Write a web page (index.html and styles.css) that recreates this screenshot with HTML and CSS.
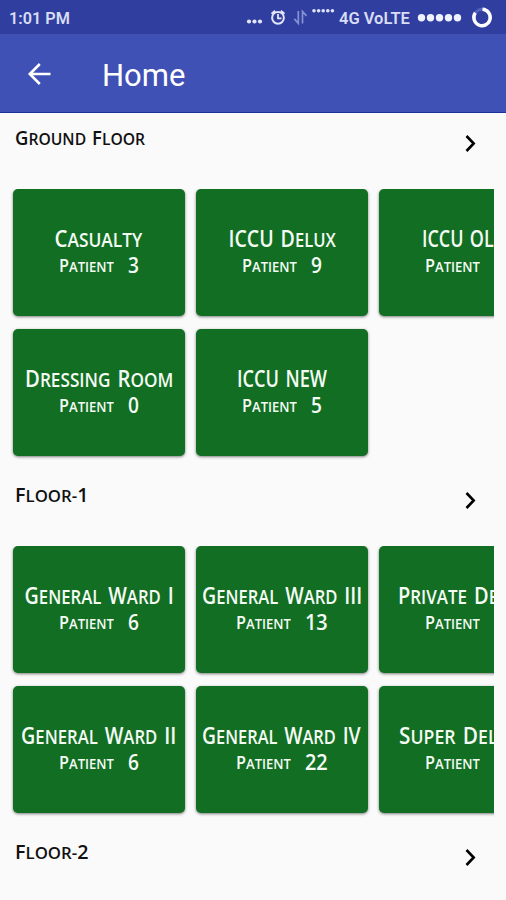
FILE: index.html
```html
<!DOCTYPE html>
<html lang="en">
<head>
<meta charset="utf-8">
<meta name="viewport" content="width=device-width">
<title>Home</title>
<link rel="stylesheet" href="styles.css">
</head>
<body>
<header>
  <div class="status">
    <span class="clock" data-width="61">1:01 PM</span>
    <svg class="status-icons" width="90" height="34" viewBox="0 0 90 34">
      <g fill="#e3e6f8"><circle cx="3" cy="21.5" r="2.1"/><circle cx="8.5" cy="21.5" r="2.1"/><circle cx="14" cy="21.5" r="2.1"/></g>
      <g fill="none" stroke="#e3e6f8" stroke-width="2"><circle cx="32" cy="17.8" r="5.9"/><path d="M32 14v4.4h3.5M25.5 13.8l3.6-3.1M38.5 13.8l-3.6-3.1" stroke-width="1.8"/></g>
      <path d="M52.3 11v12.3l-4-4.4M56.5 23.5V11.5l4 4.4" fill="none" stroke="#8792d2" stroke-width="1.7"/>
      <g fill="#dfe3f7"><circle cx="68" cy="10.7" r="1.8"/><circle cx="72.6" cy="10.7" r="1.8"/><circle cx="77.2" cy="10.7" r="1.8"/><circle cx="81.8" cy="10.7" r="1.8"/><circle cx="86.4" cy="10.7" r="1.8"/></g>
    </svg>
    <span class="network" data-width="71">4G VoLTE</span>
    <svg class="signal" width="90" height="34" viewBox="0 0 90 34">
      <g fill="#f0f2ff"><circle cx="5.5" cy="17.7" r="3.7"/><circle cx="14.5" cy="17.7" r="3.7"/><circle cx="23.5" cy="17.7" r="3.7"/><circle cx="32.5" cy="17.7" r="3.7"/><circle cx="41.5" cy="17.7" r="3.7"/></g>
      <circle cx="66" cy="17.5" r="8.2" fill="none" stroke="#5364bb" stroke-width="3"/>
      <path d="M66.5 9.3a8.2 8.2 0 1 1-7.2 3.5" fill="none" stroke="#fff" stroke-width="3.4"/>
    </svg>
  </div>
  <div class="appbar">
    <svg class="back" width="26" height="26" viewBox="0 0 26 26"><path d="M25.5 13H5M14.8 3L4.8 13l10 10" fill="none" stroke="#fff" stroke-width="2.6"/></svg>
    <h1 data-width="83">Home</h1>
  </div>
</header>
<main id="floors"></main>
<script src="app.js"></script>
</body>
</html>
```
FILE: styles.css
```css
* { box-sizing: border-box; }
body {
  margin: 0;
  height: 900px;
  overflow: hidden;
  background: #fafafa;
  font-family: "Open Sans", sans-serif;
}
.status {
  height: 34px;
  display: flex;
  align-items: center;
  background: #303f9f;
  color: #d9ddf5;
  font: 600 16.5px/32px Roboto, sans-serif;
  padding: 3px 0 0 9px;
}
.status svg { flex: none; margin-top: -3px; }
.clock { width: 237px; flex: none; }
.network { width: 80px; flex: none; padding-left: 3px; }
.appbar {
  height: 79px;
  display: flex;
  align-items: center;
  background: #3f51b5;
  border-bottom: 1.5px solid #1c339c;
  padding-left: 25px;
}
.back { margin-top: 1px; }
h1 {
  margin: 5px 0 0 51px;
  color: #fff;
  font: 400 31px/40px Roboto, sans-serif;
}
.fit { display: inline-block; white-space: nowrap; transform-origin: left; }
#floors { height: 787px; overflow: hidden; }
.floor { height: 357px; }
.floor:last-child { height: 73px; }
.floor-head {
  height: 75.6px;
  display: flex;
  justify-content: space-between;
  padding: 0 30px 0 15px;
  color: #111;
}
h2 { margin: 11px 0 0; font-size: 17px; line-height: 28px; font-weight: 600; word-spacing: 2px; }
.floor-head svg { margin-top: 21px; }
.wards {
  display: grid;
  grid-template-columns: repeat(3, 172.5px);
  grid-auto-rows: 127px;
  gap: 13.7px 10.5px;
  width: 494px;
  height: 274px;
  padding-left: 12.5px;
  overflow: hidden;
}
.ward {
  background: #126e22;
  border-radius: 5px;
  box-shadow: 0 1px 3px rgba(0, 0, 0, .5);
  color: #f4fbf4;
  display: flex;
  flex-direction: column;
  align-items: center;
  padding-top: 36px;
}
.ward h3 {
  margin: 0;
  font-size: 19.5px;
  line-height: 26px;
  height: 26px;
  font-weight: 600;
  word-spacing: 3px;
}
.ward h3 .fit { transform-origin: center; }
.patients { display: flex; height: 26px; gap: 15px; align-items: baseline; font-weight: 600; }
.label { font-size: 14.5px; line-height: 26px; width: 54px; position: relative; top: -1px; }
.count { font-size: 22px; line-height: 26px; }
.word { display: inline-block; text-transform: uppercase; }
h3 .word::first-letter, h3 .caps { font-size: 23px; }
h2 .word::first-letter, h2 .caps { font-size: 20px; }
.label .word::first-letter { font-size: 18px; }
```
FILE: app.js
```js
const floors = [
  { name: "Ground Floor", width: 130, wards: [
    ["Casualty", 3, 88], ["ICCU Delux", 9, 107], ["ICCU OLD", 4, 85],
    ["Dressing Room", 0, 148], ["ICCU NEW", 5, 90]] },
  { name: "Floor- 1", width: 73, wards: [
    ["General Ward I", 6, 149], ["General Ward III", 13, 160], ["Private Delux", 4, 133],
    ["General Ward II", 6, 155], ["General Ward IV", 22, 159], ["Super Deluxe", 4, 132]] },
  { name: "Floor- 2", width: 73, wards: [] }
];

// Words already in capitals or digits keep the full cap height.
function smallCaps(text) {
  return text.split(" ").map(w =>
    `<span class="${w === w.toUpperCase() ? "caps" : "word"}">${w}</span>`
  ).join(" ").replace("-</span> ", "-</span>");
}

document.getElementById("floors").innerHTML = floors.map(f => `
  <section class="floor">
    <div class="floor-head">
      <h2 data-width="${f.width}">${smallCaps(f.name)}</h2>
      <svg width="11" height="19" viewBox="0 0 11 19"><path d="M1.5 2l7.2 7.5L1.5 17" fill="none" stroke="#000" stroke-width="2.6"/></svg>
    </div>
    ${f.wards.length ? `<div class="wards">${f.wards.map(([name, count, width]) => `
      <article class="ward">
        <h3 data-width="${width}">${smallCaps(name)}</h3>
        <div class="patients"><span class="label" data-width="55">${smallCaps("Patient")}</span><span class="count" data-width="${String(count).length * 11.3}">${count}</span></div>
      </article>`).join("")}
    </div>` : ""}
  </section>`).join("");

// Condense each label to its set width.
document.querySelectorAll("[data-width]").forEach(el => {
  const target = Number(el.dataset.width);
  el.innerHTML = `<span class="fit">${el.innerHTML}</span>`;
  const fit = el.firstChild;
  const natural = fit.offsetWidth;
  fit.style.transform = `scaleX(${target / natural})`;
  if (el.className === "count") el.style.width = `${target}px`;
});
```
